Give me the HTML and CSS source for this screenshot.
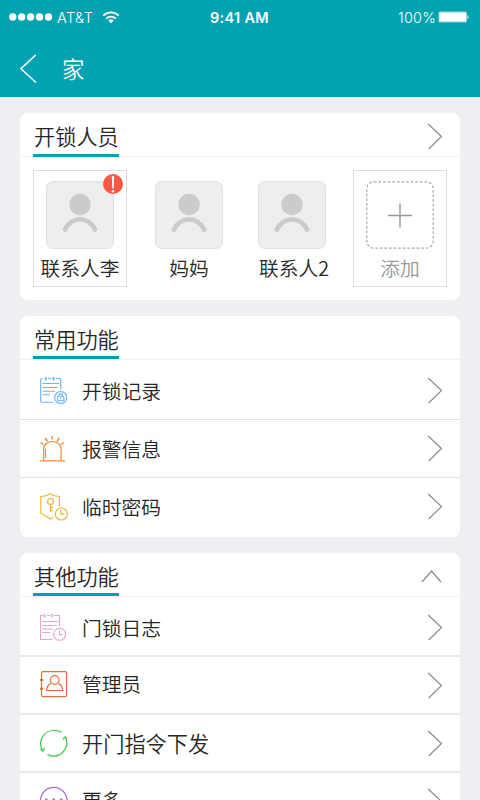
FILE: index.html
```html
<!DOCTYPE html>
<html lang="zh-CN">
<head>
<meta charset="UTF-8">
<title>家</title>
<link rel="stylesheet" href="styles.css">
</head>
<body>
<svg class="defs" width="0" height="0">
  <symbol id="person" viewBox="0 0 68 68"><circle cx="34" cy="23.500" r="10.700" fill="#cbcbcb"/><path d="M19 48.500C25 35 43 35 49 48.500" fill="none" stroke="#cbcbcb" stroke-width="4.800" stroke-linecap="round"/></symbol>
  <symbol id="chevron" viewBox="0 0 16 27"><path d="M1.200 1L14.500 13.500L1.700 26" fill="none" stroke="#8c8c8c" stroke-width="1.200"/></symbol>
</svg>
<header class="top">
  <div class="status">
    <div class="carrier">
      <svg width="44" height="10" viewBox="0 0 44 10" fill="#fff"><circle cx="3.800" cy="5" r="3.700"/><circle cx="12.700" cy="5" r="3.700"/><circle cx="21.600" cy="5" r="3.700"/><circle cx="30.500" cy="5" r="3.700"/><circle cx="39.500" cy="5" r="3.700"/></svg>
      <span class="network">AT&amp;T</span>
      <svg class="wifi" width="18" height="13" viewBox="0 0 18 13" fill="none" stroke="#fff" stroke-width="1.900"><path d="M1.300 4.700C5.600 .3 12.400 .3 16.700 4.700"/><path d="M4.200 7.600C6.900 5 11.100 5 13.800 7.600"/><path d="M6.200 9.400Q9 7.300 11.800 9.400L9 12.200Z" fill="#fff" stroke="none"/></svg>
    </div>
    <span class="time">9:41 AM</span>
    <div class="power"><span>100%</span>
      <svg width="32" height="12" viewBox="0 0 32 12"><rect x=".5" y=".5" width="28.500" height="11" rx="1.500" fill="#8fd3db"/><rect x="1.500" y="1.500" width="26.500" height="9" rx=".5" fill="#fff"/><path d="M29.500 3.500Q31.500 6 29.500 8.500Z" fill="#fff"/></svg>
    </div>
  </div>
  <div class="nav">
    <svg width="17" height="30" viewBox="0 0 17 30"><path d="M15.700 1L1 14.700L16 28.500" fill="none" stroke="#fff" stroke-width="1.500"/></svg>
    <h1>家</h1>
  </div>
</header>
<main>
  <section class="card people">
    <div class="head"><h2>开锁人员</h2><svg class="arrow"><use href="#chevron"/></svg></div>
    <div class="contacts">
      <div class="contact framed">
        <div class="avatar"><svg><use href="#person"/></svg></div><span>联系人李</span>
        <svg class="badge" viewBox="0 0 20 20"><circle cx="10" cy="10" r="10" fill="#f85843"/><path d="M8.800 2.500Q10 1.500 11.200 2.500L10.700 14.500H9.300Z" fill="#fff"/><circle cx="10" cy="17.200" r="1.200" fill="#fff"/></svg>
      </div>
      <div class="contact"><div class="avatar"><svg><use href="#person"/></svg></div><span>妈妈</span></div>
      <div class="contact"><div class="avatar"><svg><use href="#person"/></svg></div><span class="third">联系人2</span></div>
      <div class="contact framed add">
        <svg class="plus" viewBox="0 0 68 68" fill="none"><rect x=".8" y=".8" width="66.400" height="66.400" rx="7" stroke="#aaa" stroke-width="1.200" stroke-dasharray="2.800 1.800"/><path d="M22 34.500H46M34 22.500V46.500" stroke="#999" stroke-width="1.400"/></svg>
        <span>添加</span>
      </div>
    </div>
  </section>

  <section class="card common">
    <div class="head"><h2>常用功能</h2></div>
    <div class="row records">
      <svg class="icon" viewBox="0 0 30 30" fill="none" stroke="#6eb2f7" stroke-width="1.100"><path d="M4 2.500H2.700Q1.700 2.500 1.700 3.500V25Q1.700 26.300 3 26.300H14M9 2.500H12M17 2.500H20.500Q21.800 2.500 21.800 3.500V13.500M3.500 7.500H20M3.500 11.500H19M3.500 15.200H16M3.500 18.700H11"/><path d="M6.700 1V4.500M14.500 1V4.500" stroke-width="1.800"/><circle cx="21.700" cy="21.500" r="6"/><rect x="18.500" y="20.200" width="6.400" height="4.600" rx="1"/><path d="M20 20V18.700Q21.700 16.500 23.400 18.700V20M21.700 21.500V23.200"/></svg>
      <span>开锁记录</span><svg class="arrow"><use href="#chevron"/></svg>
    </div>
    <div class="row">
      <svg class="icon" viewBox="0 0 30 30" fill="none" stroke="#f68b3b" stroke-width="1.200"><path d="M1 26.800H26M4.700 26.500V15.500C4.700 4.800 22.100 4.800 22.100 15.500V26.500"/><path d="M6.500 15V24" stroke-width="1"/><path d="M13.200 2V5.500M6.300 4L8.500 7.500M20.200 4L18 7.500M1.600 8.500L4.500 10.500M24.900 8.500L22 10.500" stroke-width="1.500"/></svg>
      <span>报警信息</span><svg class="arrow"><use href="#chevron"/></svg>
    </div>
    <div class="row password">
      <svg class="icon" viewBox="0 0 30 30" fill="none" stroke="#e8ba35" stroke-width="1.200"><path d="M20.500 14V4.700Q15 4.500 11.200 1.800Q7.500 4.500 1.800 4.700V21L11.500 27L14.500 25.500"/><circle cx="11.500" cy="9.500" r="2.900"/><path d="M11.500 12.500V20M11.500 15.500H14M11.500 18.500H13.500" stroke-width="1.400"/><circle cx="22.300" cy="22" r="6"/><path d="M22 18V22.200H25.300"/></svg>
      <span>临时密码</span><svg class="arrow"><use href="#chevron"/></svg>
    </div>
  </section>

  <section class="card other">
    <div class="head"><h2>其他功能</h2><svg class="up" viewBox="0 0 21 13"><path d="M1 12L10.500 1L20 12" fill="none" stroke="#8c8c8c" stroke-width="1.200"/></svg></div>
    <div class="row log">
      <svg class="icon" viewBox="0 0 30 30" fill="none" stroke="#e6a5cf" stroke-width="1.100"><path d="M4 2.500H1.500V26.500H13.500M8 2.500H11.500M15.500 2.500H20.500V13.500M3 8.500H19M3 12.500H18M3 16H14M3 19.500H11"/><path d="M5.500 1V4.500M13.300 1V4.500" stroke-width="1.800"/><circle cx="20.600" cy="21.300" r="6"/><path d="M20.500 17.700V21.600H23.600"/></svg>
      <span>门锁日志</span><svg class="arrow"><use href="#chevron"/></svg>
    </div>
    <div class="row">
      <svg class="icon" viewBox="0 0 30 30" fill="none" stroke="#df713b" stroke-width="1.200"><rect x="2.500" y="1.700" width="25" height="25" rx="1.500"/><path d="M1 10H4.300M1 18.700H4.300" stroke-width="2"/><circle cx="15.700" cy="10" r="4.300"/><path d="M11.800 13.600Q7.700 15.500 7.500 20.500H23.800Q23.500 15.500 19.500 13.600"/></svg>
      <span class="raised">管理员</span><svg class="arrow"><use href="#chevron"/></svg>
    </div>
    <div class="row big">
      <svg class="icon" viewBox="0 0 30 30" fill="none" stroke="#4ac958" stroke-width="1.300"><path d="M3.700 23C-3.500 11 8.500-2.500 22.500 4.200M8.500 26.700C20 32 31.500 20.500 26.500 9.200M1.500 21L3.800 23.300L5.700 20.300M23.800 11.200L26.300 8.700L28 11.500"/></svg>
      <span>开门指令下发</span><svg class="arrow"><use href="#chevron"/></svg>
    </div>
    <div class="row">
      <svg class="icon" viewBox="0 0 30 30" fill="none" stroke="#a76bdc" stroke-width="1.300"><circle cx="14.800" cy="14.500" r="13.200"/><path d="M6 13.500H8.500M13.500 13.500H16M21 13.500H23.500" stroke-width="2"/></svg>
      <span class="raised">更多</span><svg class="arrow"><use href="#chevron"/></svg>
    </div>
  </section>
</main>
</body>
</html>
```
FILE: styles.css
```css
* { box-sizing: border-box; }
html, body { margin: 0; height: 800px; overflow: hidden; }
body { background: #eeeef3; color: #262626; font-family: "Noto Sans CJK SC", sans-serif; font-weight: 350; }
svg { display: block; flex: none; }
.defs { position: absolute; }
h1, h2 { margin: 0; font-weight: inherit; }
.top { height: 97px; background: #02a3b1; color: #fff; }
.status { height: 34px; padding: 0 10px 0 9px; display: grid; grid-template-columns: 1fr auto 1fr; align-items: center; font-family: Inter, sans-serif; font-size: 14.5px; font-weight: 300; }
.carrier, .power { display: flex; align-items: center; }
.network { margin-left: 4px; width: 38px; letter-spacing: .4px; white-space: nowrap; }
.wifi { margin-left: 7px; }
.time { font-weight: 600; letter-spacing: .3px; }
.power { justify-content: flex-end; gap: 2px; letter-spacing: .2px; }
.nav { height: 63px; padding-left: 20px; display: flex; align-items: center; gap: 25px; }
.nav svg { margin-top: 6px; }
.nav h1 { margin-top: 4px; font-size: 22.5px; line-height: 30px; }
main { padding: 16px 20px; display: flex; flex-direction: column; gap: 16px; }
.card { flex: none; background: #fff; border-radius: 7px; overflow: hidden; }
.people { height: 187px; }
.common { height: 221px; }
.head { height: 44px; padding: 0 18px 0 13px; border-bottom: 1px solid #f0f0f2; display: flex; justify-content: space-between; align-items: flex-start; }
.head h2 { height: 43px; width: 86px; padding-left: 1px; border-bottom: 3px solid #02a3b1; font-size: 21.2px; line-height: 46px; white-space: nowrap; }
.people h2 { height: 44px; }
.arrow { width: 16px; height: 27px; }
.head .arrow { margin-top: 10px; margin-right: -1px; }
.up { width: 21px; height: 13px; margin-top: 17px; }
.contacts { display: grid; grid-template-columns: 94px 96px 94px 94px; column-gap: 14px; justify-content: start; padding: 13px 13px 0; }
.contact { position: relative; height: 117px; padding-top: 10px; border: 1px solid transparent; display: flex; flex-direction: column; align-items: center; }
.contact:nth-child(3) { left: -6px; }
.contact.add { left: -6px; }
.framed { border-color: #dedede; }
.avatar { width: 68px; height: 68px; border: 1px solid #e1e1e1; border-radius: 7px; background: #eee; }
.avatar svg, .plus { width: 68px; height: 68px; }
.avatar svg { margin: -1px; }
.contact span { font-size: 19.8px; line-height: 30px; margin-top: 4px; white-space: nowrap; }
.contact .third { margin-left: 4px; }
.add span { color: #999; }
.badge { position: absolute; top: 3px; right: 3px; width: 20px; height: 20px; }
.row { height: 58px; border-bottom: 1px solid #e3e3e6; padding: 0 17px 0 19px; display: grid; grid-template-columns: 30px 1fr 16px; align-items: center; }
.common .records { height: 60px; padding-top: 2px; }
.common .password { height: 59px; padding-bottom: 2px; border: 0; }
.row span { padding-left: 13px; font-size: 19.8px; line-height: 30px; }
.row .raised { margin-top: -2px; }
.icon { width: 30px; height: 30px; }
.other .row { border-bottom: 2px solid #eaeaec; }
.other .log { height: 60px; padding-top: 2px; }
.log .icon { margin-top: 2px; }
.log span { margin-top: 2px; }
.row.big span { font-size: 21.2px; }
```
